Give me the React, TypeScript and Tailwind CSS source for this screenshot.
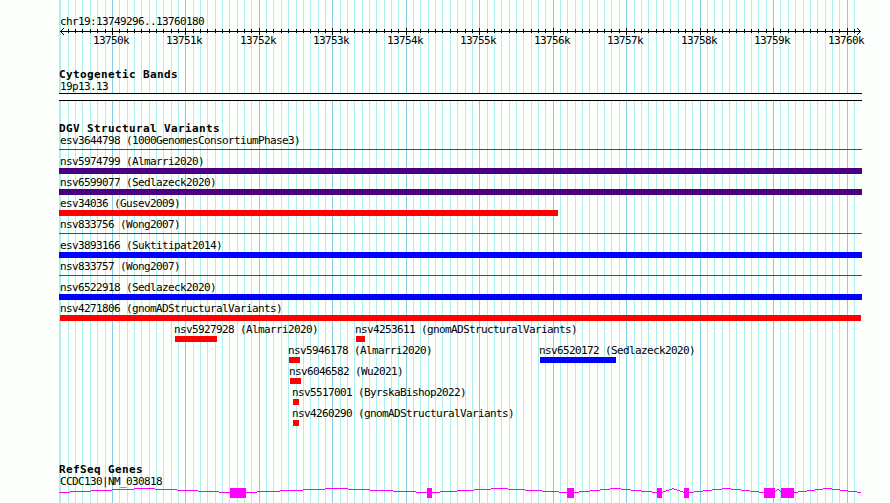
import React from "react";

type Feature = { name: string; from: number; to: number; color: string; thin?: boolean };

const RED = "bg-[#ff0000]";
const BLUE = "bg-[#0000ff]";
const INDIGO = "bg-[#4b0082]";

const ROWS: Feature[][] = [
  [{ name: "esv3644798 (1000GenomesConsortiumPhase3)", from: 59, to: 862, color: RED, thin: true }],
  [{ name: "nsv5974799 (Almarri2020)", from: 59, to: 862, color: INDIGO }],
  [{ name: "nsv6599077 (Sedlazeck2020)", from: 59, to: 862, color: INDIGO }],
  [{ name: "esv34036 (Gusev2009)", from: 59, to: 558, color: RED }],
  [{ name: "nsv833756 (Wong2007)", from: 59, to: 862, color: RED, thin: true }],
  [{ name: "esv3893166 (Suktitipat2014)", from: 59, to: 862, color: BLUE }],
  [{ name: "nsv833757 (Wong2007)", from: 59, to: 862, color: RED, thin: true }],
  [{ name: "nsv6522918 (Sedlazeck2020)", from: 59, to: 862, color: BLUE }],
  [{ name: "nsv4271806 (gnomADStructuralVariants)", from: 60, to: 861, color: RED }],
  [
    { name: "nsv5927928 (Almarri2020)", from: 175, to: 217, color: RED },
    { name: "nsv4253611 (gnomADStructuralVariants)", from: 356, to: 365, color: RED },
  ],
  [
    { name: "nsv5946178 (Almarri2020)", from: 289, to: 300, color: RED },
    { name: "nsv6520172 (Sedlazeck2020)", from: 540, to: 616, color: BLUE },
  ],
  [{ name: "nsv6046582 (Wu2021)", from: 290, to: 301, color: RED }],
  [{ name: "nsv5517001 (ByrskaBishop2022)", from: 293, to: 299, color: RED }],
  [{ name: "nsv4260290 (gnomADStructuralVariants)", from: 293, to: 299, color: RED }],
];

const EXONS: [number, number][] = [
  [230, 246],
  [427, 432],
  [567, 574],
  [657, 662],
  [684, 689],
  [764, 775],
  [781, 794],
];

const TICKS = Array.from({ length: 108 }, (_, i) => i - 6).map((k) => ({
  x: Math.floor(112.35 + 7.3475 * k),
  major: k % 10 === 0,
}));
const MAJORS = TICKS.filter((t) => t.major);

const LABEL =
  "block h-[13px] whitespace-pre font-['DejaVu_Sans_Mono',monospace] text-[11px] leading-[13px] tracking-[-0.622px] text-black";
const TITLE =
  "block h-3 pl-[59px] whitespace-pre font-['DejaVu_Sans_Mono',monospace] text-[11px] font-bold leading-[13px] tracking-[0.378px] text-black";

function Grid() {
  return (
    <svg className="absolute inset-0" width="890" height="503" shapeRendering="crispEdges">
      <rect x="59" y="0" width="2" height="503" fill="#afeeee" />
      {TICKS.map((t) => (
        <rect key={t.x} x={t.x} y="0" width="1" height="503" fill={t.major ? "#87ceeb" : "#afeeee"} />
      ))}
    </svg>
  );
}

function Axis() {
  return (
    <svg className="block h-[6px] w-[890px] overflow-visible" shapeRendering="crispEdges">
      <rect x="60" y="3" width="801" height="1" />
      {TICKS.filter((t) => t.x > 61).map((t) => (
        <rect key={t.x} x={t.x} y={t.major ? 0 : 1} width="1" height={t.major ? 7 : 4} />
      ))}
      {[1, 2, 3].map((d) => (
        <g key={d}>
          <rect x={60 + d} y={3 - d} width="1" height="1" />
          <rect x={60 + d} y={3 + d} width="1" height="1" />
          <rect x={860 - d} y={3 - d} width="1" height="1" />
          <rect x={860 - d} y={3 + d} width="1" height="1" />
        </g>
      ))}
    </svg>
  );
}

function Variant({ f, prev }: { f: Feature; prev: number }) {
  return (
    <div className="w-0 shrink-0" style={{ marginLeft: f.from - prev }}>
      <span className={`${LABEL} ${f.from === 59 ? "ml-px" : f.from === 60 ? "ml-0" : "-ml-px"}`}>{f.name}</span>
      <div
        className={`${f.color} ${f.thin ? "mt-[2px] h-px" : "h-[6px]"}`}
        style={{ width: f.to - f.from }}
      />
    </div>
  );
}

function Gene() {
  const introns: [number, number][] = [];
  let start = 59;
  for (const [a, b] of EXONS) {
    introns.push([start, a]);
    start = b;
  }
  introns.push([start, 861]);
  const levels = [0, 1, 2, 3, 4, 3, 2, 1, 0];
  return (
    <svg className="block" width="890" height="10" shapeRendering="crispEdges" fill="#ff00ff">
      {introns.map(([a, b]) =>
        levels.map((lv, i) => {
          const s = i === 0 ? a : Math.round(a + ((b - a) * (2 * i - 1)) / 16);
          const e = i === 8 ? b : Math.round(a + ((b - a) * (2 * i + 1)) / 16);
          return <rect key={`${a}-${i}`} x={s} y={4 - lv} width={Math.max(0, e - s)} height="1" />;
        }),
      )}
      {EXONS.map(([a, b]) => (
        <rect key={a} x={a} y="0" width={b - a} height="10" />
      ))}
    </svg>
  );
}

export default function App() {
  return (
    <div className="relative h-[503px] w-[890px] overflow-hidden bg-[#fdfffc]">
      <Grid />
      <main className="relative flex flex-col pt-[15px]">
        <section className="h-[53px]">
          <span className={`${LABEL} ml-[60px]`}>chr19:13749296..13760180</span>
          <Axis />
          <div className="flex">
            {MAJORS.map((t, i) => (
              <span
                key={t.x}
                className={`${LABEL} w-0 shrink-0`}
                style={{ marginLeft: i === 0 ? t.x - 19 : t.x - MAJORS[i - 1].x }}
              >
                {`${13750 + i}k`}
              </span>
            ))}
          </div>
        </section>
        <section className="h-[54px]">
          <h2 className={TITLE}>Cytogenetic Bands</h2>
          <span className={`${LABEL} ml-[60px]`}>19p13.13</span>
          <div className="ml-[59px] h-2 w-[803px] border-y border-black bg-[#fdfffc]" />
        </section>
        <section className="h-[341px]">
          <h2 className={TITLE}>DGV Structural Variants</h2>
          {ROWS.map((row, r) => (
            <div key={r} className="flex h-[21px]">
              {row.map((f, i) => (
                <Variant key={f.name} f={f} prev={i === 0 ? 0 : row[i - 1].from} />
              ))}
            </div>
          ))}
        </section>
        <section>
          <h2 className={TITLE}>RefSeq Genes</h2>
          <span className={`${LABEL} ml-[60px]`}>CCDC130|NM_030818</span>
          <Gene />
        </section>
      </main>
    </div>
  );
}
